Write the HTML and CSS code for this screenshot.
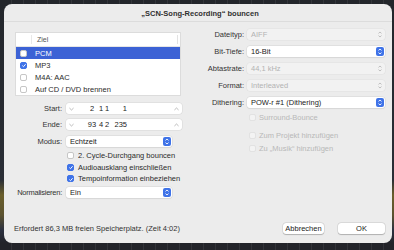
FILE: index.html
```html
<!DOCTYPE html>
<html>
	<head>
		<meta charset="utf-8">
		<title>Bounce</title>
		<link rel="stylesheet" href="styles.css">
	</head>
	<body>
		<div class="dialog">
			<div class="titlebar">„SCN-Song-Recording“ bouncen</div>
			<div class="content">
				<div class="col-left">
					<div class="dest-table">
						<div class="dest-head"><span class="head-check"></span><span class="head-name">Ziel</span><span class="head-rest"></span></div>
						<div class="dest-row selected"><span class="cb"></span>PCM</div>
						<div class="dest-row"><span class="cb checked"><svg viewBox="0 0 7 7"><path d="M1.6 3.6 L2.9 4.9 L5.4 2"/></svg></span>MP3</div>
						<div class="dest-row"><span class="cb"></span>M4A: AAC</div>
						<div class="dest-row"><span class="cb"></span>Auf CD / DVD brennen</div>
					</div>

					<div class="field-row pos-start">
						<span class="label">Start:</span>
						<div class="position">
							<svg class="chev" viewBox="0 0 6 4"><path d="M0.5 0.8 L3 3.2 L5.5 0.8"/></svg>
							<span class="pos-values"><span class="s1">2</span><span class="s2">1</span><span class="s3">1</span><span class="s4">1</span></span>
							<svg class="chev up" viewBox="0 0 6 4"><path d="M0.5 3.2 L3 0.8 L5.5 3.2"/></svg>
						</div>
					</div>
					<div class="field-row pos-end">
						<span class="label">Ende:</span>
						<div class="position">
							<svg class="chev" viewBox="0 0 6 4"><path d="M0.5 0.8 L3 3.2 L5.5 0.8"/></svg>
							<span class="pos-values"><span class="s1">93</span><span class="s2">4</span><span class="s3">2</span><span class="s4">235</span></span>
							<svg class="chev up" viewBox="0 0 6 4"><path d="M0.5 3.2 L3 0.8 L5.5 3.2"/></svg>
						</div>
					</div>
					<div class="field-row modus-row">
						<span class="label">Modus:</span>
						<div class="popup short">Echtzeit
							<svg class="stepper" viewBox="0 0 8 9"><rect width="8" height="9" rx="2"/><path d="M2.5 3.4 L4 2 L5.5 3.4 M2.5 5.6 L4 7 L5.5 5.6"/></svg>
						</div>
					</div>
					<div class="check-list">
						<div class="check-row"><span class="cb"></span>2. Cycle-Durchgang bouncen</div>
						<div class="check-row"><span class="cb checked"><svg viewBox="0 0 7 7"><path d="M1.6 3.6 L2.9 4.9 L5.4 2"/></svg></span>Audioausklang einschließen</div>
						<div class="check-row"><span class="cb checked"><svg viewBox="0 0 7 7"><path d="M1.6 3.6 L2.9 4.9 L5.4 2"/></svg></span>Tempoinformation einbeziehen</div>
					</div>
					<div class="field-row norm-row">
						<span class="label tight">Normalisieren:</span>
						<div class="popup short">Ein
							<svg class="stepper" viewBox="0 0 8 9"><rect width="8" height="9" rx="2"/><path d="M2.5 3.4 L4 2 L5.5 3.4 M2.5 5.6 L4 7 L5.5 5.6"/></svg>
						</div>
					</div>
				</div>

				<div class="col-right">
					<div class="field-row">
						<span class="label">Dateityp:</span>
						<div class="popup disabled">AIFF
							<svg class="stepper grey" viewBox="0 0 8 9"><path d="M2.5 3.4 L4 2 L5.5 3.4 M2.5 5.6 L4 7 L5.5 5.6"/></svg>
						</div>
					</div>
					<div class="field-row">
						<span class="label">Bit-Tiefe:</span>
						<div class="popup">16-Bit
							<svg class="stepper" viewBox="0 0 8 9"><rect width="8" height="9" rx="2"/><path d="M2.5 3.4 L4 2 L5.5 3.4 M2.5 5.6 L4 7 L5.5 5.6"/></svg>
						</div>
					</div>
					<div class="field-row">
						<span class="label">Abtastrate:</span>
						<div class="popup disabled">44,1 kHz
							<svg class="stepper grey" viewBox="0 0 8 9"><path d="M2.5 3.4 L4 2 L5.5 3.4 M2.5 5.6 L4 7 L5.5 5.6"/></svg>
						</div>
					</div>
					<div class="field-row">
						<span class="label">Format:</span>
						<div class="popup disabled">Interleaved
							<svg class="stepper grey" viewBox="0 0 8 9"><path d="M2.5 3.4 L4 2 L5.5 3.4 M2.5 5.6 L4 7 L5.5 5.6"/></svg>
						</div>
					</div>
					<div class="field-row">
						<span class="label">Dithering:</span>
						<div class="popup">POW-r #1 (Dithering)
							<svg class="stepper" viewBox="0 0 8 9"><rect width="8" height="9" rx="2"/><path d="M2.5 3.4 L4 2 L5.5 3.4 M2.5 5.6 L4 7 L5.5 5.6"/></svg>
						</div>
					</div>
					<div class="check-row off surround"><span class="cb"></span>Surround-Bounce</div>
					<div class="check-row off project"><span class="cb"></span>Zum Projekt hinzufügen</div>
					<div class="check-row off music"><span class="cb"></span>Zu „Musik“ hinzufügen</div>
				</div>
			</div>
			<div class="footer">
				<span class="info">Erfordert 86,3 MB freien Speicherplatz. (Zeit 4:02)</span>
				<div class="buttons">
					<div class="button cancel">Abbrechen</div>
					<div class="button ok">OK</div>
				</div>
			</div>
		</div>
	</body>
</html>
```

FILE: styles.css
```css
body{
	margin: 0;
	width: 394px;
	height: 250px;
	overflow: hidden;
	background:
		repeating-linear-gradient(90deg, transparent 0, transparent 11px, rgba(255,255,255,0.07) 11px, rgba(255,255,255,0.07) 12px),
		linear-gradient(180deg, #23262b 0, #2a2e36 180px, #6b5f2c 195px, #5c5330 215px, #2c3140 230px, #222329 243px);
	font-family: "Liberation Sans", Arial, sans-serif;
	font-size: 7.5px;
	color: #2b2b2b;
}
.dialog{
	margin: 4px 0 0 4px;
	width: 388px;
	height: 239px;
	background: #ececec;
	border-radius: 8px;
	display: flex;
	flex-direction: column;
	overflow: hidden;
}
.titlebar{
	height: 17px;
	line-height: 19px;
	text-align: center;
	font-weight: bold;
	color: #303030;
	border-bottom: 1px solid #dcdcdc;
	padding-left: 4px;
}
.content{
	display: flex;
	padding: 7px 0 0 11px;
}
.col-left{
	width: 167px;
	padding-top: 3px;
}
.col-right{
	width: 202px;
	margin-left: 1px;
	display: flex;
	flex-direction: column;
	gap: 6px;
}

/* destination list */
.dest-table{
	width: 164px;
	background: #fff;
	border: 1px solid #dcdcdc;
}
.dest-head{
	height: 13px;
	display: flex;
	align-items: center;
	border-bottom: 1px solid #e6e6e6;
	color: #555;
	font-size: 7px;
}
.head-check{
	width: 15px;
	height: 9px;
	border-right: 1px solid #e8e8e8;
}
.head-name{
	width: 140px;
	padding-left: 5px;
	height: 9px;
	line-height: 9px;
	border-right: 1px solid #e2e2e2;
}
.dest-row{
	height: 12px;
	display: flex;
	align-items: center;
	padding-left: 4px;
	gap: 8px;
}
.dest-row.selected{
	background: #3c62d5;
	color: #fff;
}

/* checkboxes */
.cb{
	width: 7px;
	height: 7px;
	box-sizing: border-box;
	border: 0.5px solid #c6c6c6;
	border-radius: 2px;
	background: #fff;
	display: inline-flex;
	flex: none;
}
.cb.checked{
	background: #3f73e8;
	border-color: #3f73e8;
}
.cb svg{
	width: 7px;
	height: 7px;
	margin: -0.5px;
}
.cb svg path{
	fill: none;
	stroke: #fff;
	stroke-width: 1.1;
}

/* label + control rows */
.field-row{
	height: 11px;
	display: flex;
	align-items: center;
}
.field-row .label{
	width: 47px;
	display: flex;
	justify-content: flex-end;
	white-space: nowrap;
	margin-right: 4px;
	color: #333;
}
.field-row .label.tight{
	letter-spacing: -0.25px;
}
.col-right .field-row .label{
	width: 61px;
	margin-right: 3px;
}
.pos-start{ margin-top: 7px; }
.pos-end{ margin-top: 5px; }
.modus-row{ margin-top: 6px; }
.norm-row{ margin-top: 2px; }

.position{
	width: 116px;
	height: 11px;
	background: #fff;
	border-radius: 3px;
	box-shadow: 0 0 0 0.5px #d6d6d6;
	display: flex;
	align-items: center;
	padding: 0 3px;
	box-sizing: border-box;
}
.chev{
	width: 5px;
	height: 4px;
}
.chev.up{
	margin-left: auto;
}
.chev path{
	fill: none;
	stroke: #9a9a9a;
	stroke-width: 0.8;
}
.pos-values{
	display: flex;
	margin-left: 12px;
	color: #222;
}
.pos-values span{
	text-align: center;
}
.s1{ width: 12px; }
.s2{ width: 6px; }
.s3{ width: 6px; }
.pos-values .s4{ width: 17px; text-align: right; }

.popup{
	width: 138px;
	height: 11px;
	box-sizing: border-box;
	padding-left: 4px;
	background: #fff;
	border-radius: 3px;
	box-shadow: 0 0 0 0.5px #d6d6d6, 0 0.5px 1px rgba(0,0,0,0.08);
	display: flex;
	align-items: center;
	justify-content: space-between;
	color: #222;
}
.popup.short{
	width: 106px;
}
.popup.disabled{
	background: #f2f2f2;
	color: #b3b3b3;
	box-shadow: 0 0 0 0.5px #e0e0e0;
}
.stepper{
	width: 8px;
	height: 9px;
	margin-right: 1px;
}
.stepper rect{
	fill: #3f73e8;
}
.stepper path{
	fill: none;
	stroke: #fff;
	stroke-width: 0.9;
}
.stepper.grey path{
	stroke: #b9b9b9;
}

.check-list{
	margin: 3px 0 2px 52px;
}
.check-row{
	height: 11.5px;
	display: flex;
	align-items: center;
	gap: 4px;
	white-space: nowrap;
}
.check-row.off{
	color: #b8b8b8;
	margin-left: 66px;
	height: 11px;
	gap: 3px;
}
.check-row.off .cb{
	background: #f3f3f3;
	border-color: #e2e2e2;
}
.col-right .surround{
	margin-top: -2px;
}
.col-right .project{
	margin-top: 1px;
}
.col-right .music{
	margin-top: -4px;
}

.footer{
	margin-top: auto;
	display: flex;
	align-items: center;
	justify-content: space-between;
	padding: 0 7px 9px 10px;
}
.info{
	color: #333;
}
.buttons{
	display: flex;
	gap: 14px;
}
.button{
	height: 11px;
	line-height: 11px;
	text-align: center;
	background: #fff;
	border-radius: 3px;
	box-shadow: 0 0 0 0.5px rgba(0,0,0,0.12), 0 0.5px 1px rgba(0,0,0,0.2);
	color: #222;
}
.cancel{ width: 41px; }
.ok{ width: 47px; }
```
